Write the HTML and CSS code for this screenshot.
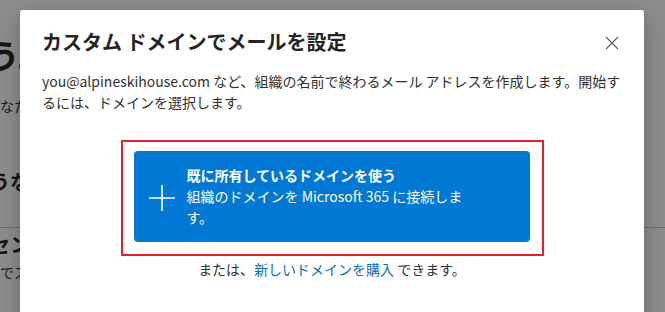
FILE: index.html
```html
<!DOCTYPE html>
<html lang="ja">
<head>
<meta charset="utf-8">
<link rel="stylesheet" href="styles.css">
</head>
<body>
<div class="page">
  <div class="bg-heading">しょう。</div>
  <div class="bg-text">あなた</div>
  <div class="bg-sub">ような</div>
  <div class="bg-rule"></div>
  <div class="bg-sub2">ライセンス</div>
  <div class="bg-text2">でスタ</div>
</div>

<div class="dialog" role="dialog">
  <div class="dialog-header">
    <h1 class="dialog-title">カスタム ドメインでメールを設定</h1>
    <button class="close" aria-label="閉じる">
      <svg width="14" height="14" viewBox="0 0 14 14"><path d="M1 1 L13 13 M13 1 L1 13" stroke="#605e5c" stroke-width="1.2" fill="none"/></svg>
    </button>
  </div>
  <p class="desc">you@alpineskihouse.com など、組織の名前で終わるメール アドレスを作成します。開始するには、ドメインを選択します。</p>
  <div class="highlight">
    <button class="primary">
      <svg class="plus" width="26" height="26" viewBox="0 0 26 26"><path d="M13 0 V26 M0 13 H26" stroke="#ffffff" stroke-width="1.6" fill="none"/></svg>
      <span class="primary-text">
        <span class="primary-title">既に所有しているドメインを使う</span>
        <span class="primary-sub">組織のドメインを Microsoft 365 に接続します。</span>
      </span>
    </button>
  </div>
  <p class="alt">または、<a class="link" href="#">新しいドメインを購入</a> できます。</p>
</div>
</body>
</html>
```

FILE: styles.css
```css
* { box-sizing: border-box; }
html, body { margin: 0; padding: 0; }
body {
  width: 665px;
  height: 312px;
  overflow: hidden;
  background: #8c8c8c;
  font-family: "Noto Sans CJK JP", "Noto Sans", sans-serif;
  color: #242424;
  position: relative;
}
.page {
  padding-top: 33px;
  color: #161616;
}
.bg-heading {
  font-size: 34px;
  font-weight: 700;
  line-height: 44px;
  margin-left: -82px;
  white-space: nowrap;
}
.bg-text {
  font-size: 14px;
  line-height: 20px;
  margin-top: 19px;
  margin-left: -14px;
}
.bg-sub {
  font-size: 20px;
  font-weight: 700;
  line-height: 28px;
  margin-top: 52px;
  margin-left: -30px;
}
.bg-rule {
  height: 1px;
  background: #6c6c6c;
  margin-top: 31px;
}
.bg-sub2 {
  font-size: 20px;
  font-weight: 700;
  line-height: 28px;
  margin-top: 3px;
  margin-left: -50px;
}
.bg-text2 {
  font-size: 14px;
  line-height: 20px;
  margin-top: 3px;
  margin-left: 0;
}

.dialog {
  position: absolute;
  left: 20px;
  top: 10px;
  width: 624px;
  height: 320px;
  background: #ffffff;
  border-radius: 2px;
  box-shadow: 0 6px 20px rgba(0,0,0,0.25);
  padding: 18px 22px 0 22px;
}
.dialog-header {
  display: flex;
  justify-content: space-between;
  align-items: center;
}
.dialog-title {
  margin: 0;
  font-size: 20px;
  font-weight: 700;
  line-height: 28px;
  color: #242424;
}
.close {
  border: 0;
  background: none;
  padding: 0;
  margin-right: 3px;
  margin-top: 2px;
  width: 14px;
  height: 14px;
  display: flex;
}
.desc {
  margin: 15px 0 0 0;
  font-size: 14px;
  line-height: 21px;
  color: #323130;
}
.highlight {
  width: 423px;
  margin: 27px auto 0 auto;
  border: 2px solid #e3202d;
  padding: 9px 12px 12px 11px;
}
.primary {
  width: 100%;
  height: 91px;
  border: 0;
  border-radius: 4px;
  background: #0078d4;
  color: #ffffff;
  display: flex;
  align-items: center;
  gap: 12px;
  padding: 0 0 0 15px;
  font-family: inherit;
  text-align: left;
}
.plus { flex: none; margin-top: 2px; }
.primary-text {
  display: flex;
  flex-direction: column;
  width: 286px;
  font-size: 14px;
  line-height: 21px;
}
.primary-title { font-weight: 700; }
.alt {
  margin: 3px 0 0 0;
  text-align: center;
  font-size: 14px;
  line-height: 21px;
  color: #323130;
}
.link {
  color: #0f6cbd;
  text-decoration: none;
}
```
